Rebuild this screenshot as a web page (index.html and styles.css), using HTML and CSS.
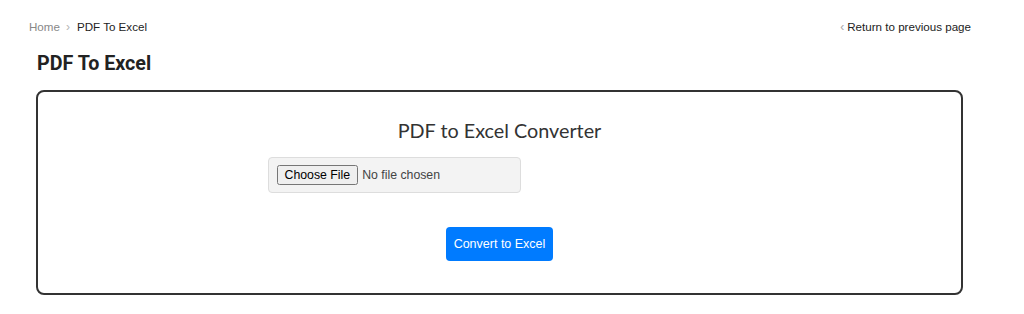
FILE: index.html
```html
<!DOCTYPE html>
<html>
<head>
<meta charset="utf-8">
<link rel="stylesheet" href="styles.css">
</head>
<body>
<div class="topbar">
  <nav class="crumbs">
    <a class="crumb-home" href="#">Home</a>
    <span class="crumb-sep">&#x203A;</span>
    <span class="crumb-current">PDF To Excel</span>
  </nav>
  <a class="back" href="#"><span class="back-arrow">&#x2039;</span>Return to previous page</a>
</div>
<h1 class="page-title">PDF To Excel</h1>
<div class="card">
  <h2 class="card-title">PDF to Excel Converter</h2>
  <form class="form">
    <div class="file-wrap">
      <input class="file" type="file">
    </div>
    <div class="actions">
      <button class="btn" type="button">Convert to Excel</button>
    </div>
  </form>
</div>
</body>
</html>
```
FILE: styles.css
```css
html, body {
  margin: 0;
  padding: 0;
  background: #fff;
}
body {
  font-family: "Liberation Sans", Arial, sans-serif;
  color: #222;
}
.topbar {
  display: flex;
  justify-content: space-between;
  align-items: center;
  padding: 18px 53px 0 29px;
  height: 17px;
  font-size: 11.6px;
}
.crumbs {
  display: flex;
  align-items: center;
}
.crumb-home {
  color: #888;
  text-decoration: none;
}
.crumb-sep {
  color: #b5b5b5;
  margin: 0 7px 0 6px;
  font-size: 12px;
}
.crumb-current {
  color: #222;
}
.back {
  color: #222;
  text-decoration: none;
}
.back-arrow {
  color: #a5a5a5;
  margin-right: 3px;
  font-size: 12px;
}
.page-title {
  font-family: Roboto, "Liberation Sans", sans-serif;
  font-weight: 700;
  font-size: 19.7px;
  color: #222;
  margin: 17px 0 0 37px;
  line-height: 23px;
}
.card {
  margin: 15px 0 0 36px;
  width: 927px;
  height: 205px;
  box-sizing: border-box;
  border: 2px solid #333;
  border-radius: 8px;
  display: flex;
  flex-direction: column;
  align-items: center;
}
.card-title {
  font-family: Lato, "Open Sans", sans-serif;
  font-weight: 400;
  font-size: 19.8px;
  color: #333;
  margin: 26px 0 0 0;
  line-height: 24px;
}
.form {
  width: 464px;
  margin-top: 15px;
}
.file-wrap {
  width: 253px;
  height: 36px;
  box-sizing: border-box;
  background: #f3f3f3;
  border: 1px solid #ddd;
  border-radius: 4px;
  display: flex;
  align-items: center;
  padding-left: 8px;
}
.file {
  font-family: "Liberation Sans", Arial, sans-serif;
  font-size: 12.3px;
  color: #444;
}
.actions {
  display: flex;
  justify-content: center;
  margin-top: 34px;
}
.btn {
  background: #007bff;
  color: #fff;
  border: none;
  border-radius: 4px;
  width: 107px;
  height: 34px;
  font-family: "Liberation Sans", Arial, sans-serif;
  font-size: 12.5px;
  padding: 0;
}
```
